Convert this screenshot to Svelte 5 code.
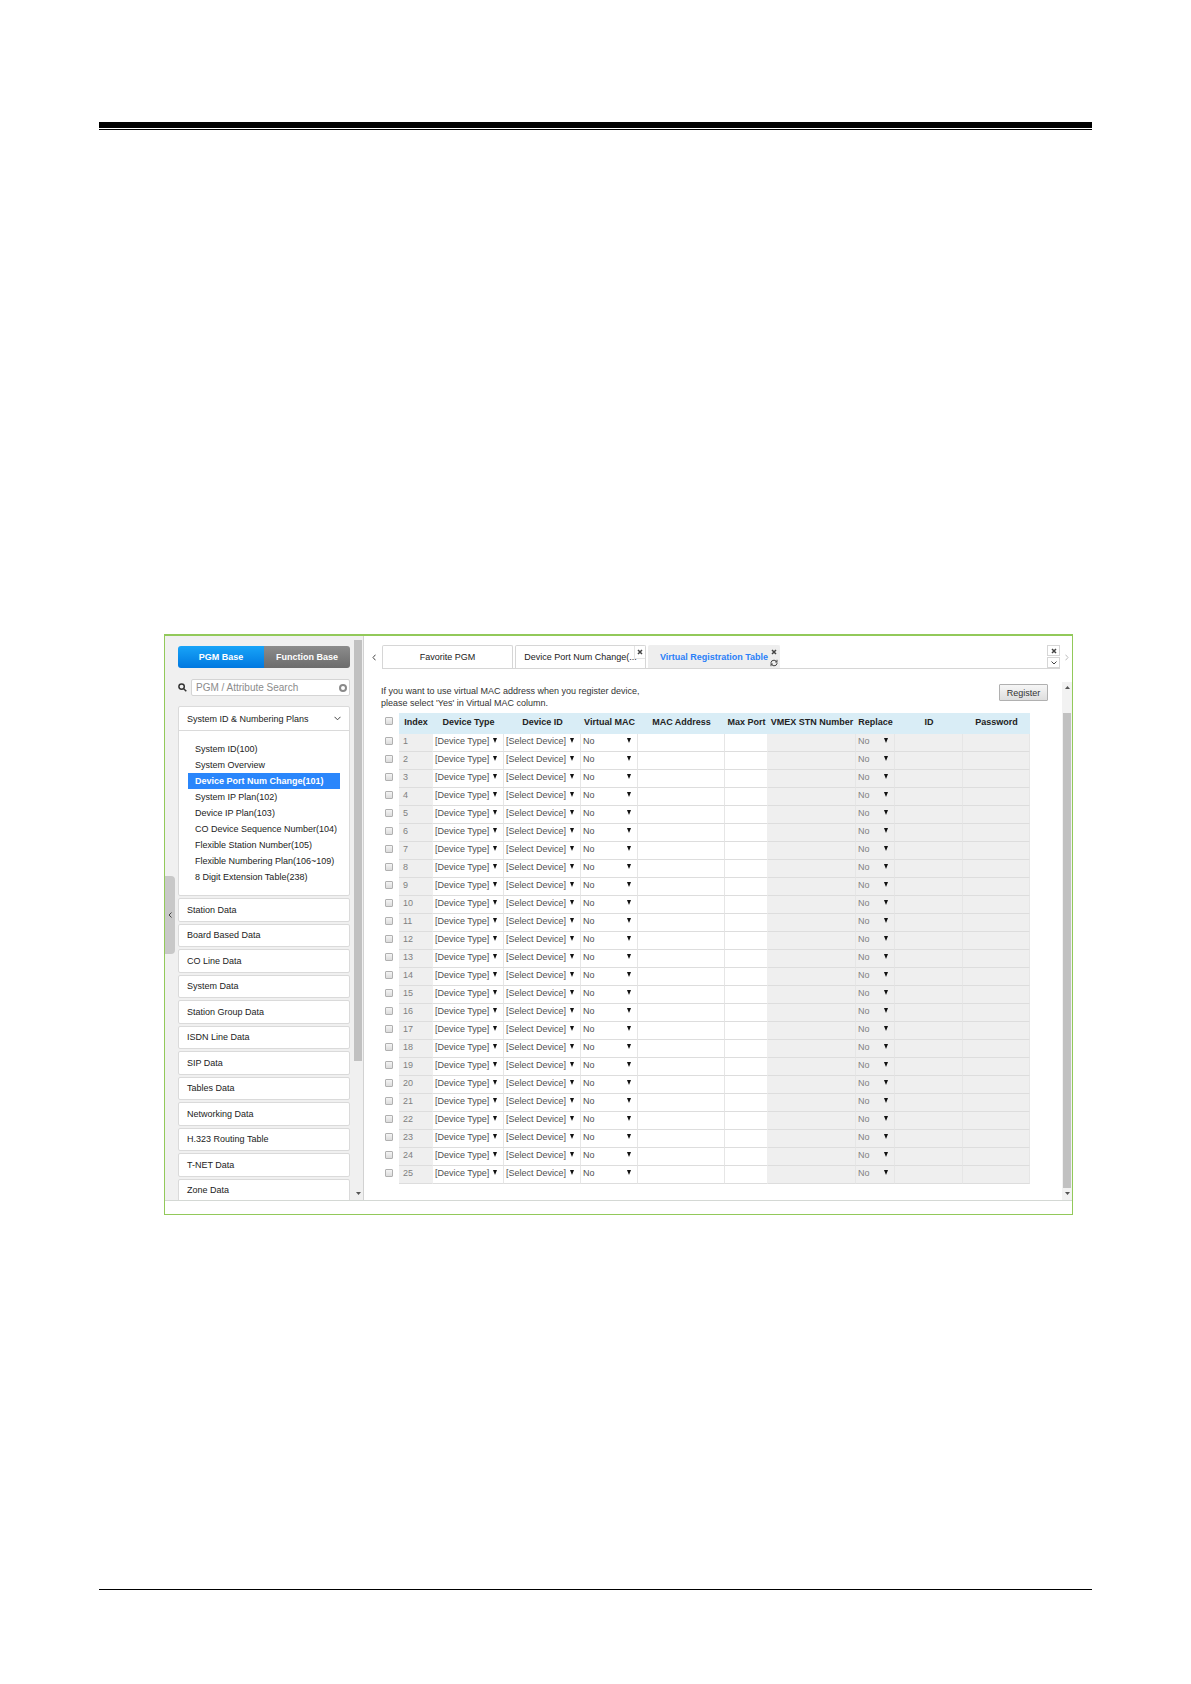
<script>
    const menu = [
        "System ID(100)",
        "System Overview",
        "Device Port Num Change(101)",
        "System IP Plan(102)",
        "Device IP Plan(103)",
        "CO Device Sequence Number(104)",
        "Flexible Station Number(105)",
        "Flexible Numbering Plan(106~109)",
        "8 Digit Extension Table(238)",
    ];
    const groups = [
        "Station Data",
        "Board Based Data",
        "CO Line Data",
        "System Data",
        "Station Group Data",
        "ISDN Line Data",
        "SIP Data",
        "Tables Data",
        "Networking Data",
        "H.323 Routing Table",
        "T-NET Data",
        "Zone Data",
    ];
    const rows = Array.from({ length: 25 }, (_, i) => ({
        index: i + 1,
        checked: false,
    }));

    let active = "Device Port Num Change(101)";
    let base = "pgm";
    let search = "";
    let allChecked = false;

    function toggleAll() {
        rows.forEach((row, i) => (rows[i].checked = allChecked));
    }
</script>

<div class="page">
    <header class="page-rule"></header>

    <div class="frame">
        <div class="body">
            <button class="handle" aria-label="Collapse menu">
                <svg width="4" height="6" viewBox="0 0 4 6">
                    <path d="M3.5 0.5L1 3L3.5 5.5" />
                </svg>
            </button>

            <aside class="sidebar">
                <div class="menu">
                    <div class="switch">
                        <button
                            class:on={base == "pgm"}
                            on:click={() => (base = "pgm")}>PGM Base</button
                        >
                        <button
                            class:on={base == "function"}
                            on:click={() => (base = "function")}
                            >Function Base</button
                        >
                    </div>

                    <div class="search">
                        <label for="search" aria-label="Search">
                            <svg width="9" height="9" viewBox="0 0 9 9">
                                <circle cx="3.6" cy="3.6" r="2.7" />
                                <path d="M5.7 5.7L8.3 8.3" />
                            </svg>
                        </label>
                        <div class="search-box">
                            <input
                                type="text"
                                id="search"
                                placeholder="PGM / Attribute Search"
                                bind:value={search}
                            />
                            <button
                                aria-label="Clear search"
                                on:click={() => (search = "")}
                            >
                                <svg width="8" height="8" viewBox="0 0 8 8">
                                    <circle cx="4" cy="4" r="3" />
                                </svg>
                            </button>
                        </div>
                    </div>

                    <section class="group open">
                        <button class="group-title">
                            System ID &amp; Numbering Plans
                            <svg width="7" height="5" viewBox="0 0 7 5">
                                <path d="M0.5 0.8L3.5 3.8L6.5 0.8" />
                            </svg>
                        </button>
                        <ul>
                            {#each menu as item}
                                <li>
                                    <a
                                        href="#pgm"
                                        class:selected={item == active}
                                        on:click|preventDefault={() =>
                                            (active = item)}>{item}</a
                                    >
                                </li>
                            {/each}
                        </ul>
                    </section>

                    <div class="groups">
                        {#each groups as group}
                            <button class="group group-title">{group}</button>
                        {/each}
                    </div>
                </div>
                <div class="scroll">
                    <div class="thumb side-thumb"></div>
                    <svg class="down" width="5" height="3" viewBox="0 0 5 3">
                        <path d="M0 0H5L2.5 3Z" />
                    </svg>
                </div>
            </aside>

            <main>
                <nav>
                    <button class="arrow" aria-label="Previous tab">
                        <svg width="4" height="7" viewBox="0 0 4 7">
                            <path d="M3.5 0.7L1 3.5L3.5 6.3" />
                        </svg>
                    </button>
                    <div class="tabs">
                        <button class="tab">Favorite PGM</button>
                        <div class="tab closable">
                            <button class="tab-name"
                                >Device Port Num Change(...</button
                            >
                            <button class="tool corner" aria-label="Close tab">
                                <svg width="6" height="6" viewBox="0 0 6 6">
                                    <path
                                        class="cross"
                                        d="M1 1L5 5M5 1L1 5"
                                    />
                                </svg>
                            </button>
                        </div>
                        <div class="tab current">
                            <button class="tab-name"
                                >Virtual Registration Table</button
                            >
                            <div class="tools">
                                <button class="tool" aria-label="Close tab">
                                    <svg width="6" height="6" viewBox="0 0 6 6">
                                        <path
                                            class="cross"
                                            d="M1 1L5 5M5 1L1 5"
                                        />
                                    </svg>
                                </button>
                                <button class="tool" aria-label="Reload tab">
                                    <svg width="8" height="8" viewBox="0 0 8 8">
                                        <path
                                            d="M1 4.8V3.6Q1.2 1.3 4 1.2Q5.6 1.2 6.6 2.6M7 0.8V2.9H5M7 3.4V4.6Q6.6 6.8 4 6.8Q2.4 6.8 1.4 5.4M1 7.2V5.1H3"
                                        />
                                    </svg>
                                </button>
                            </div>
                        </div>
                        <div class="all-tabs">
                            <button aria-label="Close all tabs">
                                <svg width="6" height="6" viewBox="0 0 6 6">
                                    <path
                                        class="cross"
                                        d="M1 1L5 5M5 1L1 5"
                                    />
                                </svg>
                            </button>
                            <button aria-label="List tabs">
                                <svg width="6" height="4" viewBox="0 0 6 4">
                                    <path d="M0.5 0.5L3 3L5.5 0.5" />
                                </svg>
                            </button>
                        </div>
                    </div>
                    <button class="arrow next" aria-label="Next tab">
                        <svg width="4" height="7" viewBox="0 0 4 7">
                            <path d="M0.5 0.7L3 3.5L0.5 6.3" />
                        </svg>
                    </button>
                </nav>

                <div class="view">
                    <div class="content">
                        <div class="intro">
                            <p>
                                If you want to use virtual MAC address when you
                                register device,<br />
                                please select 'Yes' in Virtual MAC column.
                            </p>
                            <button class="register">Register</button>
                        </div>

                        <table>
                            <colgroup>
                                <col class="c-check" />
                                <col class="c-index" />
                                <col class="c-type" />
                                <col class="c-device" />
                                <col class="c-virtual" />
                                <col class="c-mac" />
                                <col class="c-port" />
                                <col class="c-vmex" />
                                <col class="c-replace" />
                                <col class="c-id" />
                                <col class="c-password" />
                            </colgroup>
                            <thead>
                                <tr>
                                    <td class="check">
                                        <input
                                            type="checkbox"
                                            aria-label="Select all"
                                            bind:checked={allChecked}
                                            on:change={toggleAll}
                                        />
                                    </td>
                                    <th>Index</th>
                                    <th>Device Type</th>
                                    <th>Device ID</th>
                                    <th>Virtual MAC</th>
                                    <th>MAC Address</th>
                                    <th>Max Port</th>
                                    <th>VMEX STN Number</th>
                                    <th>Replace</th>
                                    <th>ID</th>
                                    <th>Password</th>
                                </tr>
                            </thead>
                            <tbody>
                                {#each rows as row}
                                    <tr>
                                        <td class="check">
                                            <input
                                                type="checkbox"
                                                aria-label="Select row {row.index}"
                                                bind:checked={row.checked}
                                            />
                                        </td>
                                        <td class="off index">{row.index}</td>
                                        <td>
                                            <div class="select">
                                                <select aria-label="Device Type">
                                                    <option
                                                        >[Device Type]</option
                                                    >
                                                </select>
                                            </div>
                                        </td>
                                        <td>
                                            <div class="select">
                                                <select aria-label="Device ID">
                                                    <option
                                                        >[Select Device]</option
                                                    >
                                                </select>
                                            </div>
                                        </td>
                                        <td>
                                            <div class="select">
                                                <select aria-label="Virtual MAC">
                                                    <option>No</option>
                                                    <option>Yes</option>
                                                </select>
                                            </div>
                                        </td>
                                        <td>
                                            <input
                                                type="text"
                                                aria-label="MAC Address"
                                            />
                                        </td>
                                        <td class="port">
                                            <input
                                                type="text"
                                                aria-label="Max Port"
                                            />
                                        </td>
                                        <td class="off"></td>
                                        <td class="off">
                                            <div class="select">
                                                <select
                                                    aria-label="Replace"
                                                    disabled
                                                >
                                                    <option>No</option>
                                                </select>
                                            </div>
                                        </td>
                                        <td class="off"></td>
                                        <td class="off"></td>
                                    </tr>
                                {/each}
                            </tbody>
                        </table>
                    </div>
                    <div class="scroll view-scroll">
                        <svg class="up" width="5" height="3" viewBox="0 0 5 3">
                            <path d="M0 3H5L2.5 0Z" />
                        </svg>
                        <div class="thumb view-thumb"></div>
                        <svg class="down" width="5" height="3" viewBox="0 0 5 3">
                            <path d="M0 0H5L2.5 3Z" />
                        </svg>
                    </div>
                </div>
            </main>
        </div>
    </div>

    <footer class="page-rule"></footer>
</div>

<style>
    :global(body) {
        background: #ffffff;
    }

    .page {
        box-sizing: border-box;
        color: #333333;
        display: flex;
        flex-direction: column;
        font-family: "Liberation Sans", Arial, sans-serif;
        font-size: 9px;
        min-height: 100vh;
        padding: 122px 99px 94px;
    }

    header.page-rule {
        border-bottom: 1px solid #000000;
        border-top: 6px solid #000000;
        height: 1px;
    }

    footer.page-rule {
        border-top: 1px solid #000000;
        margin-top: auto;
    }

    button,
    input,
    select {
        background: none;
        border: none;
        box-sizing: border-box;
        color: inherit;
        font: inherit;
        margin: 0;
        padding: 0;
    }

    button {
        cursor: pointer;
    }

    svg {
        display: block;
        fill: none;
        stroke: #444444;
    }

    .frame {
        border: 1px solid #92c95a;
        border-top-width: 2px;
        margin: 504px 19px 0 65px;
        padding-bottom: 13px;
    }

    .body {
        border-bottom: 1px solid #d4d8d4;
        display: flex;
        position: relative;
    }

    .handle {
        align-items: center;
        background: #c8c8c8;
        border-radius: 0 4px 4px 0;
        display: flex;
        height: 78px;
        justify-content: center;
        left: 0;
        position: absolute;
        top: 240px;
        width: 10px;
    }

    .sidebar {
        background: #f0f0f0;
        border-right: 1px solid #d2d2d2;
        box-sizing: border-box;
        display: flex;
        flex: none;
        overflow: hidden;
        width: 199px;
    }

    .menu {
        display: flex;
        flex: 1;
        flex-direction: column;
        padding: 10px 4px 0 13px;
    }

    .switch {
        border-radius: 3px;
        display: flex;
        flex: none;
        height: 22px;
        overflow: hidden;
    }

    .switch button {
        background: linear-gradient(#8c8c8c, #6c6c6c);
        color: #ffffff;
        flex: 1;
        font-weight: bold;
    }

    .switch .on {
        background: linear-gradient(#18a4f8, #0078e0);
    }

    .search {
        align-items: center;
        display: flex;
        gap: 4px;
        margin: 11px 0 10px;
    }

    .search label svg {
        stroke: #333333;
        stroke-width: 1.5;
    }

    .search-box {
        align-items: center;
        background: #ffffff;
        border: 1px solid #d4d4d4;
        border-radius: 2px;
        box-sizing: border-box;
        display: flex;
        flex: 1;
        height: 17px;
        padding: 0 2px 0 4px;
    }

    .search-box input {
        flex: 1;
        font-size: 10px;
        min-width: 0;
        outline: none;
    }

    .search-box input::placeholder {
        color: #8c8c8c;
        opacity: 1;
    }

    .search-box svg {
        stroke: #8a8a8a;
        stroke-width: 2;
    }

    .group {
        background: #ffffff;
        border: 1px solid #dadada;
        border-radius: 2px;
    }

    .group-title {
        align-items: center;
        color: #222222;
        display: flex;
        justify-content: space-between;
        padding: 0 8px;
        text-align: left;
    }

    .open {
        margin-bottom: 2px;
    }

    .open .group-title {
        border-bottom: 1px solid #dadada;
        height: 24px;
        width: 100%;
    }

    ul {
        list-style: none;
        margin: 0;
        padding: 10px 9px;
    }

    li a {
        color: #222222;
        display: block;
        line-height: 16px;
        padding-left: 7px;
        text-decoration: none;
        white-space: nowrap;
    }

    li .selected {
        background: #2a86fb;
        color: #ffffff;
        font-weight: bold;
    }

    .groups {
        display: grid;
        flex: 1;
        gap: 2px;
        grid-auto-rows: 1fr;
        margin-bottom: -2px;
    }

    .scroll {
        align-items: center;
        display: flex;
        flex: none;
        flex-direction: column;
        padding: 4px 1px 5px 0;
    }

    .scroll svg {
        fill: #555555;
        stroke: none;
    }

    .thumb {
        background: #c1c1c1;
        width: 8px;
    }

    .side-thumb {
        height: 421px;
    }

    .view-scroll {
        background: #f2f2f2;
        padding-left: 1px;
    }

    .view-thumb {
        flex: 1;
        margin: 24px 0 4px;
    }

    .down {
        margin-top: auto;
    }

    main {
        display: flex;
        flex: 1;
        flex-direction: column;
        min-width: 0;
    }

    nav {
        display: flex;
        padding-top: 9px;
    }

    .arrow {
        align-items: center;
        display: flex;
        justify-content: center;
        padding-left: 2px;
        width: 18px;
    }

    .next {
        width: 12px;
    }

    .next svg {
        stroke: #bbbbbb;
    }

    .tabs {
        border-bottom: 1px solid #d6d6d6;
        display: flex;
        flex: 1;
        gap: 2px;
        height: 23px;
    }

    .tab {
        border: 1px solid #d6d6d6;
        border-bottom: none;
        border-radius: 2px 2px 0 0;
        box-sizing: border-box;
        color: #222222;
        display: flex;
        justify-content: center;
        width: 131px;
    }

    .tabs > button.tab {
        align-items: center;
    }

    .tab-name {
        flex: 1;
        white-space: nowrap;
    }

    .closable {
        position: relative;
    }

    .corner {
        background: #ffffff;
        position: absolute;
        right: 0;
        top: 0;
    }

    .current {
        background: #eeeeee;
        border-color: #eeeeee;
        color: #2a80f8;
        font-weight: bold;
        width: 132px;
    }

    .current .tab-name {
        padding-left: 11px;
    }

    .tools {
        display: flex;
        flex-direction: column;
    }

    .tool {
        align-items: center;
        display: flex;
        height: 11px;
        justify-content: center;
        width: 11px;
    }

    .tab .corner {
        border-bottom: 1px solid #e4e4e4;
        border-left: 1px solid #e4e4e4;
        height: 13px;
    }

    .cross {
        stroke-width: 1.5;
    }

    .all-tabs {
        display: flex;
        flex-direction: column;
        gap: 1px;
        margin-left: auto;
    }

    .all-tabs button {
        align-items: center;
        border: 1px solid #d6d6d6;
        display: flex;
        height: 11px;
        justify-content: center;
        width: 13px;
    }

    .view {
        display: flex;
        flex: 1;
        margin-top: 13px;
    }

    .content {
        flex: 1;
        min-width: 0;
        padding: 2px 32px 16px 17px;
    }

    .intro {
        align-items: flex-start;
        display: flex;
        justify-content: space-between;
        margin-bottom: 4px;
        margin-right: -18px;
    }

    p {
        line-height: 12px;
        margin: 1px 0 0;
    }

    .register {
        background: linear-gradient(#f6f6f6, #dedede);
        border: 1px solid #b0b0b0;
        border-radius: 1px;
        height: 17px;
        width: 49px;
    }

    table {
        border-collapse: separate;
        border-spacing: 0;
        table-layout: fixed;
        width: 100%;
    }

    .c-check {
        width: 18px;
    }

    .c-index {
        width: 34px;
    }

    .c-type {
        width: 71px;
    }

    .c-device {
        width: 77px;
    }

    .c-virtual {
        width: 57px;
    }

    .c-mac {
        width: 87px;
    }

    .c-port {
        width: 43px;
    }

    .c-vmex {
        width: 88px;
    }

    .c-replace {
        width: 39px;
    }

    .c-id {
        width: 68px;
    }

    .c-password {
        width: 67px;
    }

    th {
        background: #d9edf6;
        color: #222222;
        height: 21px;
        padding: 0 0 4px;
        white-space: nowrap;
    }

    th,
    td {
        box-sizing: border-box;
    }

    td {
        border-bottom: 1px solid #dddddd;
        border-right: 1px solid #e6e6e6;
        height: 18px;
        padding: 0 0 4px;
    }

    .off {
        background: #efefef;
        color: #808080;
    }

    .index,
    .port {
        border-right-color: #efefef;
    }

    .index {
        padding-left: 4px;
    }

    .check {
        border: none;
    }

    thead .check {
        padding-bottom: 6px;
    }

    input[type="checkbox"] {
        appearance: none;
        background: linear-gradient(#f4f4f4, #dcdcdc);
        border: 1px solid #b0b0b0;
        border-radius: 1px;
        display: block;
        height: 8px;
        margin-left: 4px;
        width: 8px;
    }

    input[type="checkbox"]:checked {
        background: #2a86fb;
    }

    td input[type="text"] {
        display: block;
        height: 13px;
        padding: 0 3px;
        width: 100%;
    }

    .select {
        align-items: center;
        display: flex;
        position: relative;
    }

    .select::after {
        border: 2px solid transparent;
        border-bottom: none;
        border-top: 5px solid #111111;
        content: "";
        pointer-events: none;
        position: absolute;
        right: 6px;
    }

    select {
        appearance: none;
        color: #505050;
        height: 13px;
        opacity: 1;
        padding-left: 2px;
        width: 100%;
    }

    select:disabled {
        color: #808080;
    }
</style>
